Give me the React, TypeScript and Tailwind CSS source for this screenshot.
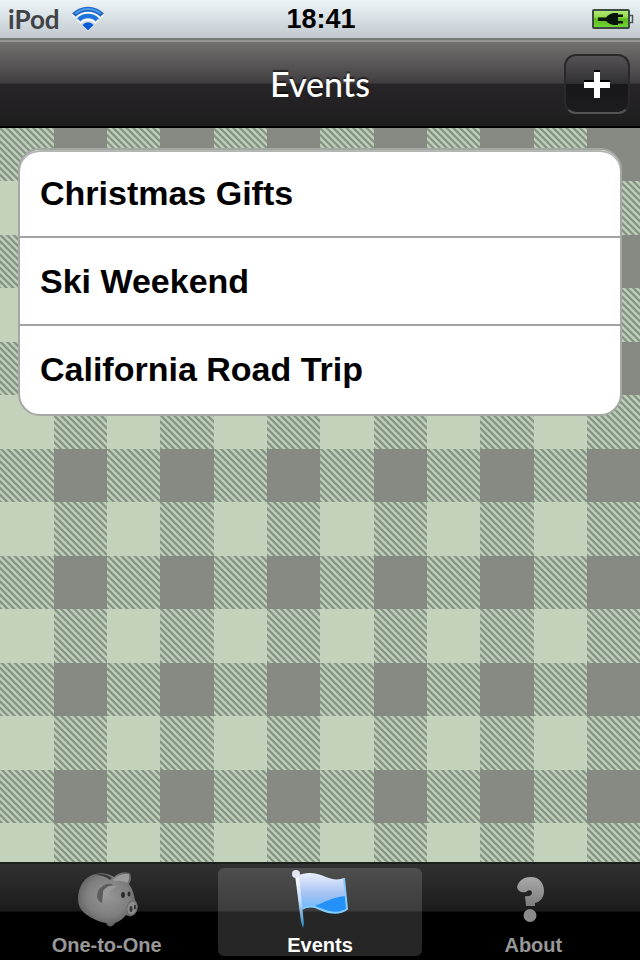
import React from 'react';

interface IconProps {
    className?: string;
}

interface TabButtonProps {
    label: string;
    isActive?: boolean;
    children: React.ReactNode;
}

const EVENTS = ['Christmas Gifts', 'Ski Weekend', 'California Road Trip'];

const WifiIcon: React.FC<IconProps> = ({ className }) => (
    <svg viewBox="0 0 32 26" className={className} aria-hidden="true">
        <g fill="none" stroke="#ffffff" strokeOpacity="0.8" strokeWidth="5" transform="translate(0 1.5)">
            <path d="M1.9 9.5A20 20 0 0 1 30.100 9.500M6.800 14.500A13 13 0 0 1 25.200 14.500" />
        </g>
        <path d="M11.200 20.200A7 7 0 0 1 20.800 20.200L16 25.500Z" fill="#ffffff" fillOpacity="0.8" />
        <path d="M1.900 9A20 20 0 0 1 30.100 9" fill="none" stroke="#1f68c8" strokeWidth="5" />
        <path d="M3.500 7.500A20 20 0 0 1 28.500 7.500" fill="none" stroke="#4f9ae6" strokeWidth="2" />
        <path d="M6.800 13.900A13 13 0 0 1 25.200 13.900" fill="none" stroke="#1d74dc" strokeWidth="4.500" />
        <path d="M10.500 19A7 7 0 0 1 21.500 19L16 24.500Z" fill="#0a5bd4" />
    </svg>
);

const BatteryIcon: React.FC<IconProps> = ({ className }) => (
    <svg viewBox="0 0 42 20" className={className} aria-label="Charging">
        <defs>
            <linearGradient id="battery" x1="0" y1="0" x2="0" y2="1">
                <stop offset="0" stopColor="#b6e97a" />
                <stop offset="0.4" stopColor="#8fd84e" />
                <stop offset="0.5" stopColor="#5cbb1c" />
                <stop offset="1" stopColor="#75d637" />
            </linearGradient>
        </defs>
        <rect x="1" y="1" width="36" height="18" rx="1" fill="url(#battery)" stroke="#3c4a44" strokeWidth="2" />
        <path d="M38 6.500h2.500v7H38" fill="#dfe6e8" stroke="#4b5358" strokeWidth="1.500" />
        <path
            d="M6 8.500h8q3-4 8-4.500h4v1.500h5v2.500h-5v4h5v2.500h-5v1.500h-4q-5-.5-8-4H6z"
            fill="#07140a"
        />
    </svg>
);

const PlusIcon: React.FC<IconProps> = ({ className }) => (
    <svg viewBox="0 0 26 28" className={className} aria-hidden="true">
        <path d="M10 0h6v10h10v6H16v10h-6V16H0v-6h10z" fill="#000000" />
        <path d="M10 2h6v10h10v6H16v10h-6V18H0v-6h10z" fill="#ffffff" />
    </svg>
);

const PiggyIcon: React.FC<IconProps> = ({ className }) => (
    <svg viewBox="-2 0 62 56" className={className} aria-hidden="true">
        <defs>
            <radialGradient id="pig" cx="0.5" cy="0.45" r="0.6">
                <stop offset="0" stopColor="#969696" />
                <stop offset="0.6" stopColor="#7f7f7f" />
                <stop offset="1" stopColor="#565656" />
            </radialGradient>
        </defs>
        <path
            d="M0 27C0 14 7 4 18 2C24 0 31 2 36 5C40 1 46 -1 52 1C54 5 53 9 51 12C54 16 56 22 57 28C60 31 60 38 57 42C54 45 51 45 48 43C44 48 40 50 37 51C35 55 30 56 28 51C20 50 14 46 9 43C3 39 0 34 0 27Z"
            fill="url(#pig)"
        />
        <path d="M17 3Q26 0 34 6L32 8Q26 3 17 3Z" fill="#3a3a3a" />
        <path d="M36 7Q43 1 51 2Q52 8 49 11Q43 8 36 9Z" fill="#9b9b9b" />
        <path d="M19 25Q19 15 29 12Q34 11 36 14Q28 15 25 21L24 31Q20 29 19 25Z" fill="#5c5c5c" />
        <path d="M25 19Q30 12 39 14Q33 17 30 22Q27 26 25 28Z" fill="#999999" />
        <ellipse cx="45" cy="23" rx="2" ry="3" fill="#2c2c2c" />
        <ellipse cx="51" cy="22" rx="1.500" ry="2.500" fill="#2c2c2c" />
        <ellipse cx="54" cy="36" rx="5" ry="7" fill="#8d8d8d" stroke="#6a6a6a" transform="rotate(15 54 36)" />
        <ellipse cx="53" cy="37" rx="1.500" ry="3" fill="#3a3a3a" />
        <ellipse cx="57" cy="35" rx="1.200" ry="2.500" fill="#3a3a3a" />
    </svg>
);

const FlagIcon: React.FC<IconProps> = ({ className }) => (
    <svg viewBox="0 0 58 60" className={className} aria-hidden="true">
        <defs>
            <linearGradient id="flag" x1="0" y1="0" x2="0" y2="1">
                <stop offset="0" stopColor="#e9effc" />
                <stop offset="0.5" stopColor="#a9c3f4" />
                <stop offset="1" stopColor="#5fb6fb" />
            </linearGradient>
            <linearGradient id="pole" x1="0" y1="0" x2="0" y2="1">
                <stop offset="0" stopColor="#ffffff" />
                <stop offset="0.5" stopColor="#c3dcfb" />
                <stop offset="1" stopColor="#2580b8" />
            </linearGradient>
        </defs>
        <path d="M6 6C16 1 25 3 35 7C42 10 48 10 53 8L56 39C48 45 38 43 29 39C23 36 16 37 11 39Z" fill="url(#flag)" />
        <path d="M24 36C34 32 42 27 55 26L56 39C48 45 38 43 24 36Z" fill="#2491f8" />
        <path d="M11 39C16 36 23 36 29 39C38 43 48 45 56 39L53 8" fill="none" stroke="#84cdfd" strokeWidth="2" />
        <path d="M4 5h4l5 49-1 4-2-6z" fill="url(#pole)" />
        <circle cx="5" cy="4" r="4" fill="#e3e6ee" />
    </svg>
);

const QuestionIcon: React.FC<IconProps> = ({ className }) => (
    <svg viewBox="0 0 32 46" className={className} aria-hidden="true">
        <defs>
            <linearGradient id="question" x1="0" y1="0" x2="0" y2="1">
                <stop offset="0" stopColor="#a9a9a9" />
                <stop offset="1" stopColor="#7c7c7c" />
            </linearGradient>
        </defs>
        <path
            d="M0 10C2 3 7 0 14 0C22 0 27 6 27 14C27 21 23 25 18 26L18 29H9L8 19C12 20 15 18 15 16C15 13 12 12 9 15C6 16 1 15 0 10Z"
            fill="url(#question)"
        />
        <circle cx="13" cy="38.500" r="6.500" fill="#8b8b8b" />
    </svg>
);

// Gingham cloth: solid squares where bands of one colour cross, twill elsewhere
const PlaidBackground: React.FC = () => (
    <svg className="absolute inset-0 w-full h-full" aria-hidden="true">
        <defs>
            <pattern id="twill" width="20" height="20" viewBox="0 0 3 3" patternUnits="userSpaceOnUse">
                <rect width="3" height="3" fill="#bccfb9" />
                <path
                    d="M-1 2L2 5M-1 1L3 5M-1 0L4 5M-1-1L4 4M0-1L5 4M1-1L5 3M2-1L5 2"
                    stroke="#869283"
                    strokeWidth="0.340"
                />
            </pattern>
            <pattern id="gingham" width="320" height="107" patternUnits="userSpaceOnUse">
                <path d="M54 0h53v53h-53zM160 0h54v53h-54zM267 0h53v53h-53z" fill="#868a83" />
                <path d="M0 53h54v54H0zM107 53h53v54h-53zM214 53h53v54h-53z" fill="#c2d2bb" />
            </pattern>
        </defs>
        <rect width="100%" height="100%" fill="url(#twill)" />
        <rect width="100%" height="100%" fill="url(#gingham)" />
    </svg>
);

const StatusBar: React.FC = () => (
    <div className="grid grid-cols-3 items-center h-10 pl-2 pr-1.5 bg-linear-to-b from-[#eef5f9] to-[#c2c9ce] border-b-2 border-[#777975]">
        <div className="flex items-center gap-3">
            <span className="font-['Lato'] font-bold text-[26px] leading-8 text-[#3f4347]">iPod</span>
            <WifiIcon className="w-8 h-[26px]" />
        </div>
        <span className="text-center font-bold text-[27px] leading-8 text-black">18:41</span>
        <BatteryIcon className="w-[42px] h-5 justify-self-end" />
    </div>
);

const TabButton: React.FC<TabButtonProps> = ({ label, isActive = false, children }) => (
    <button
        aria-current={isActive ? 'page' : undefined}
        className={`flex-1 h-[88px] mx-[5px] flex flex-col items-center justify-between rounded-md ${
            isActive ? 'bg-white/15 text-white' : 'text-[#989898]'
        }`}
    >
        <span className="h-16 flex items-center justify-center">{children}</span>
        <span className="font-bold text-xl leading-[22px]">{label}</span>
    </button>
);

export default function App() {
    return (
        <div className="min-h-screen flex flex-col bg-black font-['Liberation_Sans',Arial,sans-serif]">
            <StatusBar />
            <header className="h-[88px] grid grid-cols-[1fr_auto_1fr] items-center px-2.5 border-t-2 border-t-[#949692] border-b-2 border-b-black bg-[linear-gradient(to_bottom,#747270_0%,#403e40_49%,#272527_50%,#1e1d1e_100%)]">
                <h1 className="col-start-2 font-['Lato'] font-medium text-[34px] leading-10 text-white [text-shadow:0_-2px_1px_#00000080]">
                    Events
                </h1>
                <button
                    aria-label="Add event"
                    className="justify-self-end w-[66px] h-[60px] flex items-center justify-center rounded-xl border-2 border-[#29282a] border-b-[#555456] bg-[linear-gradient(to_bottom,#555355_0%,#302f31_49%,#171618_50%,#1c1b1d_100%)]"
                >
                    <PlusIcon className="w-[26px] h-7" />
                </button>
            </header>

            <main className="relative flex-1 px-[18px] pt-5 pb-6">
                <PlaidBackground />
                <ul className="relative pb-0.5 bg-white rounded-[22px] border-2 border-[#a5a7a5] shadow-[inset_0_2px_0_#b4b6b4] divide-y-2 divide-[#a3a3a3] overflow-hidden">
                    {EVENTS.map((name) => (
                        <li key={name}>
                            <button className="w-full h-[86px] px-5 text-left font-bold text-[34px] leading-10 text-black">
                                {name}
                            </button>
                        </li>
                    ))}
                </ul>
            </main>

            <nav className="h-[98px] flex items-center border-t-2 border-[#1a211b] bg-[linear-gradient(to_bottom,#303130_0%,#1b1b1b_49%,#000000_50%,#000000_100%)]">
                <TabButton label="One-to-One">
                    <PiggyIcon className="w-[62px] h-14" />
                </TabButton>
                <TabButton label="Events" isActive>
                    <FlagIcon className="w-[58px] h-[60px]" />
                </TabButton>
                <TabButton label="About">
                    <QuestionIcon className="w-8 h-[46px]" />
                </TabButton>
            </nav>
        </div>
    );
}
